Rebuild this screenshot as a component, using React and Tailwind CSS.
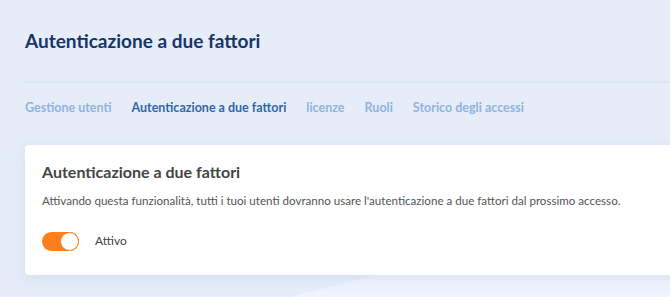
export default function App() {
  const tabs = [
    { label: "Gestione utenti", active: false },
    { label: "Autenticazione a due fattori", active: true },
    { label: "licenze", active: false },
    { label: "Ruoli", active: false },
    { label: "Storico degli accessi", active: false },
  ];
  return (
    <div
      className="relative w-[670px] h-[297px] overflow-hidden bg-[#e6edf9]"
      style={{ fontFamily: "Lato, 'Noto Sans', sans-serif" }}
    >
      <div
        className="absolute inset-0 bg-[#eef3fd]"
        style={{ clipPath: "polygon(290px 297px, 670px 200px, 670px 297px)" }}
      />
      <div className="relative pl-[25px]">
        <div className="h-[81px] flex items-center">
          <h1 className="text-[19px] font-bold text-[#16346a] leading-none -mt-[1px]">
            Autenticazione a due fattori
          </h1>
        </div>
        <div className="h-[2px] bg-[#dde5f2]" />
        <div className="h-[62px] flex items-start pt-[19px] gap-[20px]">
          {tabs.map((t) => (
            <span
              key={t.label}
              className={
                "text-[12.5px] font-bold leading-none " +
                (t.active ? "text-[#2f67a5]" : "text-[#8fb4dd]")
              }
            >
              {t.label}
            </span>
          ))}
        </div>
        <div className="w-[700px] h-[130px] bg-white rounded-[4px] shadow-[0_4px_12px_rgba(160,180,220,0.25)] px-[17px] pt-[19px]">
          <h2 className="text-[16px] font-bold text-[#444] leading-none">
            Autenticazione a due fattori
          </h2>
          <p className="mt-[15px] text-[11.6px] text-[#555] leading-none">
            Attivando questa funzionalità, tutti i tuoi utenti dovranno usare l'autenticazione a due fattori dal prossimo accesso.
          </p>
          <div className="mt-[25px] flex items-center gap-[16px]">
            <div className="w-[37px] h-[19px] rounded-full bg-[#ff7f1e] relative">
              <div className="absolute right-0 top-0 w-[19px] h-[19px] rounded-full bg-white border-[1.5px] border-[#ff7f1e]" />
            </div>
            <span className="text-[12px] text-[#444] leading-none">Attivo</span>
          </div>
        </div>
      </div>
    </div>
  );
}
